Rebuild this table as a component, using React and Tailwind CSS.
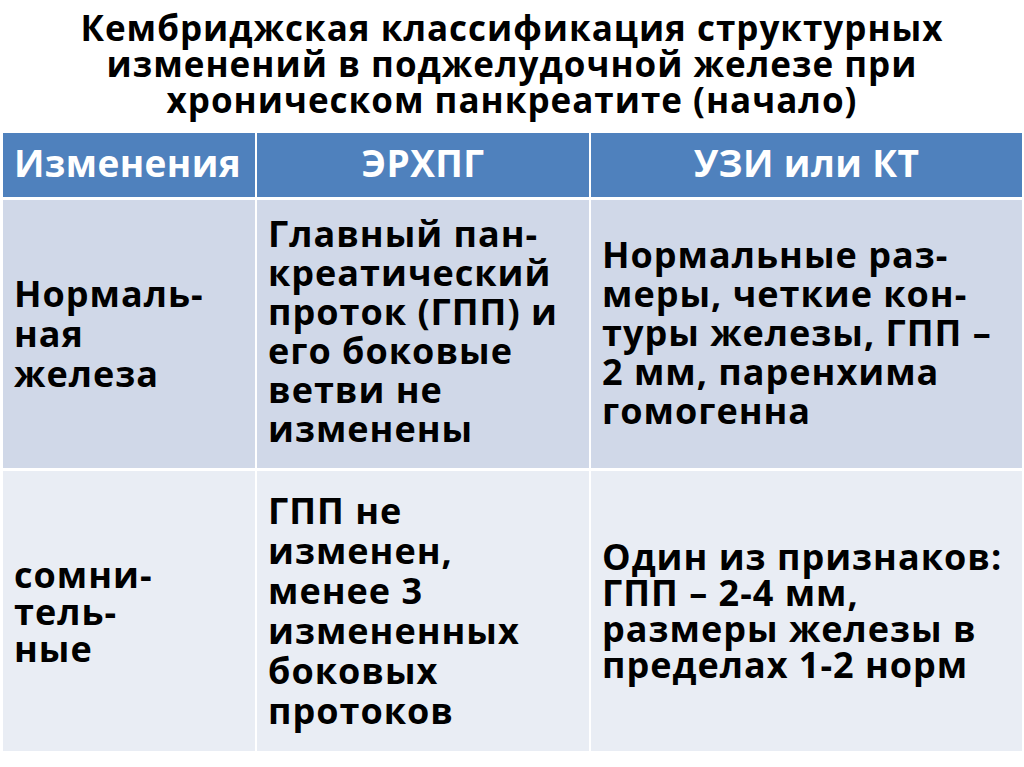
import React from "react";

const font = { fontFamily: '"Open Sans", "Noto Sans", sans-serif' };

function Lines({ lines }) {
  return lines.map((l, i) => (
    <span key={i} className="block whitespace-nowrap">
      {l}
    </span>
  ));
}

export default function App() {
  return (
    <div className="w-[1024px] h-[767px] bg-white overflow-hidden font-bold text-black" style={font}>
      <div className="h-[133px] flex flex-col items-center justify-center pb-[6px] text-[35px] leading-[36px] tracking-[1px]">
        <Lines
          lines={[
            "Кембриджская классификация структурных",
            "изменений в поджелудочной железе при",
            "хроническом панкреатите (начало)",
          ]}
        />
      </div>
      <div className="ml-[3px] w-[1019px] grid grid-cols-[252px_332px_431px] grid-rows-[64px_268px_280px] gap-x-[2px] gap-y-[3px]">
        <div className="bg-[#4f81bd] text-white flex items-center pl-[11px] text-[37px] tracking-[0.4px] pb-[4px]">
          Изменения
        </div>
        <div className="bg-[#4f81bd] text-white flex items-center justify-center text-[37px] tracking-[0.4px] pb-[4px]">
          ЭРХПГ
        </div>
        <div className="bg-[#4f81bd] text-white flex items-center justify-center text-[37px] tracking-[0.4px] pb-[4px]">
          УЗИ или КТ
        </div>

        <div className="bg-[#d0d8e8] flex items-center pl-[11px] text-[36px] leading-[40px] tracking-[1px]">
          <div>
            <Lines lines={["Нормаль-", "ная", "железа"]} />
          </div>
        </div>
        <div className="bg-[#d0d8e8] flex items-center pl-[11px] text-[36px] leading-[39px] tracking-[1px] pb-[6px]">
          <div>
            <Lines
              lines={[
                "Главный пан-",
                "креатический",
                "проток (ГПП) и",
                "его боковые",
                "ветви не",
                "изменены",
              ]}
            />
          </div>
        </div>
        <div className="bg-[#d0d8e8] flex items-center pl-[11px] text-[36px] leading-[39px] tracking-[1px] pb-[4px]">
          <div>
            <Lines
              lines={[
                "Нормальные раз-",
                "меры, четкие кон-",
                "туры железы, ГПП –",
                "2 мм, паренхима",
                "гомогенна",
              ]}
            />
          </div>
        </div>

        <div className="bg-[#e9edf4] flex items-center pl-[11px] text-[36px] leading-[37px] tracking-[1px]">
          <div>
            <Lines lines={["сомни-", "тель-", "ные"]} />
          </div>
        </div>
        <div className="bg-[#e9edf4] flex items-center pl-[11px] text-[36px] leading-[40px] tracking-[1px]">
          <div>
            <Lines
              lines={[
                "ГПП не",
                "изменен,",
                "менее 3",
                "измененных",
                "боковых",
                "протоков",
              ]}
            />
          </div>
        </div>
        <div className="bg-[#e9edf4] flex items-center pl-[11px] text-[36px] leading-[36px] tracking-[1px]">
          <div>
            <Lines
              lines={[
                "Один из признаков:",
                "ГПП – 2-4 мм,",
                "размеры железы в",
                "пределах 1-2 норм",
              ]}
            />
          </div>
        </div>
      </div>
    </div>
  );
}
